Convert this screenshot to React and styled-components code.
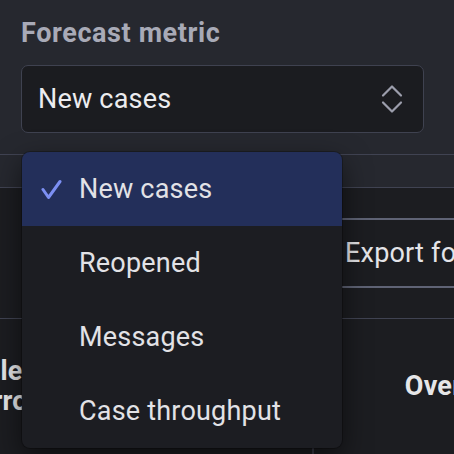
import React from "react";
import styled, { createGlobalStyle } from "styled-components";

const GlobalStyle = createGlobalStyle`
  html, body {
    margin: 0;
    padding: 0;
    background: #1c1d21;
  }
  * {
    box-sizing: border-box;
  }
`;

const Page = styled.div`
  width: 454px;
  height: 454px;
  overflow: hidden;
  position: relative;
  background: #1c1d21;
  font-family: Roboto, "Noto Sans", sans-serif;
  font-size: 27px;
  letter-spacing: 0.2px;
  color: #e4e4e8;
`;

const Header = styled.header`
  background: #26282f;
  padding: 17px 30px 0 21px;
  height: 155px;
  border-bottom: 1px solid #404352;
`;

const Label = styled.div`
  font-size: 27px;
  font-weight: 700;
  letter-spacing: 0.6px;
  color: #a8aab7;
  line-height: 32px;
  margin-bottom: 16px;
`;

const SelectWrap = styled.div`
  position: relative;
`;

const SelectBox = styled.div`
  height: 68px;
  display: flex;
  align-items: center;
  justify-content: space-between;
  padding: 0 20px 0 16px;
  background: #1b1c20;
  border: 1.5px solid #3f4250;
  border-radius: 7px;
  color: #ececef;
`;

const Tabs = styled.div`
  height: 33px;
  background: #26282f;
  border-bottom: 1px solid #404352;
`;

const Toolbar = styled.div`
  display: flex;
  padding: 30px 0 30px 327px;
  border-bottom: 1px solid #404352;
`;

const ExportButton = styled.button`
  flex: none;
  height: 70px;
  padding: 0 16px;
  background: transparent;
  border: 2px solid #5f6375;
  border-right: none;
  font-family: inherit;
  font-size: inherit;
  letter-spacing: inherit;
  color: #e4e4e8;
  white-space: nowrap;
`;

const columns = "200px 135px 272px";

const TableHead = styled.div`
  display: grid;
  grid-template-columns: ${columns};
  margin-left: -23px;
  height: 128px;
  padding-top: 6px;
`;

const HeadCell = styled.div`
  display: flex;
  align-items: center;
  justify-content: ${(p) => (p.$center ? "center" : "flex-start")};
  text-align: ${(p) => (p.$center ? "center" : "left")};
  font-weight: 700;
  line-height: 30px;
  color: #e6e6e8;
`;

const TableRow = styled.div`
  display: grid;
  grid-template-columns: ${columns};
  margin-left: -23px;
  height: 60px;
`;

const BodyCell = styled.div`
  border-left: ${(p) => (p.$divider ? "2px solid #3a3b48" : "none")};
`;

const Menu = styled.ul`
  position: absolute;
  top: calc(100% + 19px);
  left: 1px;
  width: 320px;
  margin: 0;
  padding: 0;
  list-style: none;
  background: #1c1d22;
  border-radius: 8px;
  overflow: hidden;
  box-shadow: 0 10px 28px rgba(0, 0, 0, 0.55), 0 0 0 1px rgba(0, 0, 0, 0.25);
  z-index: 5;
`;

const Option = styled.li`
  height: 74px;
  display: flex;
  align-items: center;
  gap: 17px;
  padding-left: 19px;
  color: #e2e2e6;
  background: ${(p) => (p.$active ? "#232f5a" : "transparent")};
`;

const CheckSlot = styled.span`
  width: 21px;
  height: 21px;
  display: flex;
  align-items: center;
  justify-content: center;
`;

const Chevrons = () => (
  <svg width="22" height="30" viewBox="0 0 22 30" fill="none">
    <path d="M2 11.5 L11 2.5 L20 11.5" stroke="#9c9eac" strokeWidth="2.2" strokeLinecap="round" strokeLinejoin="round" />
    <path d="M2 18.5 L11 27.5 L20 18.5" stroke="#9c9eac" strokeWidth="2.2" strokeLinecap="round" strokeLinejoin="round" />
  </svg>
);

const Check = () => (
  <svg width="21" height="21" viewBox="0 0 21 21" fill="none">
    <path d="M2 10.5 L7.5 18.5 L19 2.5" stroke="#7c8ff2" strokeWidth="3" strokeLinecap="round" strokeLinejoin="round" />
  </svg>
);

const options = ["New cases", "Reopened", "Messages", "Case throughput"];

export default function App() {
  const selected = "New cases";
  return (
    <Page>
      <GlobalStyle />
      <Header>
        <Label>Forecast metric</Label>
        <SelectWrap>
          <SelectBox>
            <span>{selected}</span>
            <Chevrons />
          </SelectBox>
          <Menu>
            {options.map((o) => (
              <Option key={o} $active={o === selected}>
                <CheckSlot>{o === selected && <Check />}</CheckSlot>
                {o}
              </Option>
            ))}
          </Menu>
        </SelectWrap>
      </Header>
      <Tabs />
      <Toolbar>
        <ExportButton>Export forecast</ExportButton>
      </Toolbar>
      <TableHead>
        <HeadCell>
          Idle time
          <br />
          Error rate
        </HeadCell>
        <HeadCell />
        <HeadCell $center>Overall</HeadCell>
      </TableHead>
      <TableRow>
        <BodyCell />
        <BodyCell />
        <BodyCell $divider />
      </TableRow>
    </Page>
  );
}
